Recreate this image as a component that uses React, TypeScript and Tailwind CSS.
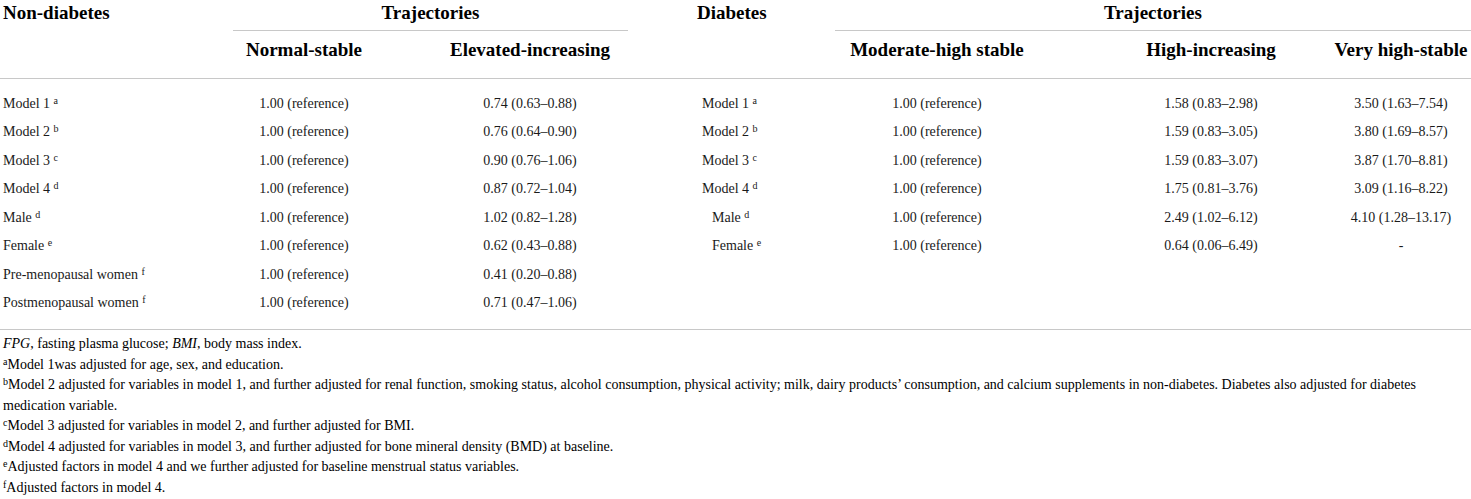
const cols = "grid grid-cols-[233px_142px_310px_150px_204px_292px_140px]";

type Row = {
  label: string;
  sup: string;
  a: string;
  b: string;
  dLabel?: string;
  dSup?: string;
  indent?: boolean;
  c?: string;
  d?: string;
  e?: string;
};

const rows: Row[] = [
  { label: "Model 1", sup: "a", a: "1.00 (reference)", b: "0.74 (0.63–0.88)", dLabel: "Model 1", dSup: "a", c: "1.00 (reference)", d: "1.58 (0.83–2.98)", e: "3.50 (1.63–7.54)" },
  { label: "Model 2", sup: "b", a: "1.00 (reference)", b: "0.76 (0.64–0.90)", dLabel: "Model 2", dSup: "b", c: "1.00 (reference)", d: "1.59 (0.83–3.05)", e: "3.80 (1.69–8.57)" },
  { label: "Model 3", sup: "c", a: "1.00 (reference)", b: "0.90 (0.76–1.06)", dLabel: "Model 3", dSup: "c", c: "1.00 (reference)", d: "1.59 (0.83–3.07)", e: "3.87 (1.70–8.81)" },
  { label: "Model 4", sup: "d", a: "1.00 (reference)", b: "0.87 (0.72–1.04)", dLabel: "Model 4", dSup: "d", c: "1.00 (reference)", d: "1.75 (0.81–3.76)", e: "3.09 (1.16–8.22)" },
  { label: "Male", sup: "d", a: "1.00 (reference)", b: "1.02 (0.82–1.28)", dLabel: "Male", dSup: "d", indent: true, c: "1.00 (reference)", d: "2.49 (1.02–6.12)", e: "4.10 (1.28–13.17)" },
  { label: "Female", sup: "e", a: "1.00 (reference)", b: "0.62 (0.43–0.88)", dLabel: "Female", dSup: "e", indent: true, c: "1.00 (reference)", d: "0.64 (0.06–6.49)", e: "-" },
  { label: "Pre-menopausal women", sup: "f", a: "1.00 (reference)", b: "0.41 (0.20–0.88)" },
  { label: "Postmenopausal women", sup: "f", a: "1.00 (reference)", b: "0.71 (0.47–1.06)" },
];

const Sup = ({ children }: { children: string }) => (
  <span className="text-[10px] relative -top-[4px] leading-none">{children}</span>
);

export default function App() {
  return (
    <div className="w-[1471px] h-[499px] bg-white text-[#1a1a1a] font-['Liberation_Serif',serif] overflow-hidden">
      {/* header row 1 */}
      <div className={`${cols} h-[31px] text-[19px] font-bold leading-[23px] text-black`}>
        <div className="pl-[3px] pt-[1px]">Non-diabetes</div>
        <div className="col-span-2 mr-[57px] pt-[1px] text-center border-b border-[#c8c8c8]">
          Trajectories
        </div>
        <div className="pl-[12px] pt-[1px]">Diabetes</div>
        <div className="col-span-3 pt-[1px] text-center border-b border-[#c8c8c8]">
          Trajectories
        </div>
      </div>

      {/* header row 2 */}
      <div className={`${cols} h-[48px] pt-[7px] text-[19px] font-bold leading-[23px] text-black border-b border-[#c8c8c8]`}>
        <div />
        <div className="text-center">Normal-stable</div>
        <div className="text-center">Elevated-increasing</div>
        <div />
        <div className="text-center">Moderate-high stable</div>
        <div className="pl-[52px] text-center">High-increasing</div>
        <div className="text-center">Very high-stable</div>
      </div>

      {/* body */}
      <div className="pt-[10px] pb-[12px] border-b border-[#c8c8c8] text-[14px]">
        {rows.map((r) => (
          <div key={r.label} className={`${cols} h-[28.5px] items-center`}>
            <div className="pl-[3px]">
              {r.label} <Sup>{r.sup}</Sup>
            </div>
            <div className="text-center">{r.a}</div>
            <div className="text-center">{r.b}</div>
            <div className={r.indent ? "pl-[27px]" : "pl-[17px]"}>
              {r.dLabel && (
                <>
                  {r.dLabel} <Sup>{r.dSup ?? ""}</Sup>
                </>
              )}
            </div>
            <div className="text-center">{r.c}</div>
            <div className="pl-[52px] text-center">{r.d}</div>
            <div className="text-center">{r.e}</div>
          </div>
        ))}
      </div>

      {/* footnotes */}
      <div className="pt-[4px] pl-[3px] text-[14px] leading-[20.5px] text-black">
        <p>
          <i>FPG</i>, fasting plasma glucose; <i>BMI</i>, body mass index.
        </p>
        <p>
          <Sup>a</Sup>Model 1was adjusted for age, sex, and education.
        </p>
        <p className="whitespace-nowrap">
          <Sup>b</Sup>Model 2 adjusted for variables in model 1, and further adjusted for renal function, smoking
          status, alcohol consumption, physical activity; milk, dairy products’ consumption, and calcium supplements
          in non-diabetes. Diabetes also adjusted for diabetes
          <br />
          medication variable.
        </p>
        <p>
          <Sup>c</Sup>Model 3 adjusted for variables in model 2, and further adjusted for BMI.
        </p>
        <p>
          <Sup>d</Sup>Model 4 adjusted for variables in model 3, and further adjusted for bone mineral density (BMD) at
          baseline.
        </p>
        <p>
          <Sup>e</Sup>Adjusted factors in model 4 and we further adjusted for baseline menstrual status variables.
        </p>
        <p>
          <Sup>f</Sup>Adjusted factors in model 4.
        </p>
      </div>
    </div>
  );
}
